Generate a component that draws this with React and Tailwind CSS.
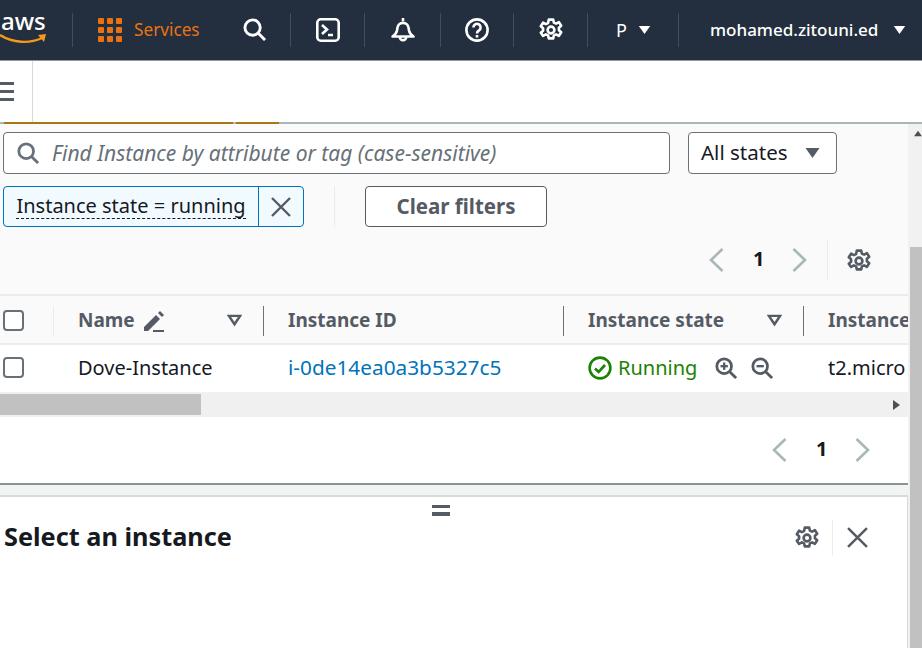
function Divider({ className = "h-[34px] bg-[#414d5c]" }) {
  return <div className={`w-px shrink-0 ${className}`} />;
}

function Caret({ className = "" }) {
  return (
    <svg viewBox="0 0 16 12" className={className}>
      <path d="M1 1h14L8 11z" fill="currentColor" />
    </svg>
  );
}

function SortCaret() {
  return (
    <svg viewBox="0 0 16 14" className="h-[13px] w-[15px] text-[#545b64]">
      <path d="M2 2h12L8 11z" fill="none" stroke="currentColor" strokeWidth="2.6" />
    </svg>
  );
}

function Gear({ className = "" }) {
  return (
    <svg viewBox="0 0 24 24" fill="none" stroke="currentColor" strokeWidth="2.6" strokeLinejoin="round" className={className}>
      <circle cx="12" cy="12" r="3.4" />
      <path d="M9.8 1.6h4.4l.7 3 2.2 1 2.8-1.5 2.3 3.7-2.3 2v2.4l2.3 2-2.3 3.7-2.8-1.5-2.2 1-.7 3H9.8l-.7-3-2.2-1-2.8 1.5L1.8 14.7l2.3-2v-2.4l-2.3-2 2.3-3.7 2.8 1.5 2.2-1z" />
    </svg>
  );
}

function SearchIcon({ className = "" }) {
  return (
    <svg viewBox="0 0 24 24" fill="none" stroke="currentColor" strokeWidth="3" className={className}>
      <circle cx="10" cy="10" r="8" />
      <path d="M15.5 15.5 23 23" />
    </svg>
  );
}

function ZoomIcon({ plus }) {
  return (
    <svg viewBox="0 0 24 24" fill="none" stroke="#545b64" strokeWidth="3" className="h-[22px] w-[22px]">
      <circle cx="10" cy="10" r="8" />
      <path d="M15.5 15.5 23 23" />
      <path d="M6 10h8" strokeWidth="2.6" />
      {plus && <path d="M10 6v8" strokeWidth="2.6" />}
    </svg>
  );
}

function CloseIcon({ className = "" }) {
  return (
    <svg viewBox="0 0 20 20" fill="none" stroke="#545b64" strokeWidth="2.4" className={className}>
      <path d="M1 1l18 18M19 1 1 19" />
    </svg>
  );
}

function Checkbox() {
  return <div className="h-[21px] w-[21px] rounded-[4px] border-2 border-[#687078] bg-white" />;
}

function Pager() {
  return (
    <div className="flex items-center gap-[29px]">
      <svg viewBox="0 0 15 26" fill="none" stroke="#aab7b8" strokeWidth="2.6" className="h-[26px] w-[15px]">
        <path d="M13.5 2 2 13l11.5 11" />
      </svg>
      <span className="mb-[2px] w-[10px] text-center text-[20px] font-bold text-[#16191f]">1</span>
      <svg viewBox="0 0 15 26" fill="none" stroke="#aab7b8" strokeWidth="2.6" className="h-[26px] w-[15px]">
        <path d="M1.5 2 13 13 1.5 24" />
      </svg>
    </div>
  );
}

function TopBar() {
  return (
    <header className="flex h-[61px] items-center border-b border-[#8d99a8] bg-[#232f3e] text-white">
      <div className="flex w-[72px] shrink-0 flex-col overflow-hidden pl-[1px]">
        <span className="-mt-[6px] text-[24px] leading-[26px] font-medium">aws</span>
        <svg viewBox="0 0 47 12" className="-ml-[1px] h-[12px] w-[47px]">
          <path d="M0 1c13 8 29 9 42 3" fill="none" stroke="#f7981d" strokeWidth="2.4" />
          <path d="M38 1l8-1-2 8z" fill="#f7981d" />
        </svg>
      </div>
      <Divider />
      <div className="flex w-[217px] shrink-0 items-center pl-[25px]">
        <div className="grid grid-cols-3 gap-[3px]">
          {[...Array(9)].map((_, i) => (
            <div key={i} className="h-[6px] w-[6px] rounded-[1px] bg-[#ec7211]" />
          ))}
        </div>
        <span className="ml-[12px] text-[17.2px] text-[#ec7211]">Services</span>
        <SearchIcon className="ml-[43px] h-[23px] w-[23px] text-white" />
      </div>
      <Divider />
      <div className="flex w-[73px] shrink-0 justify-center">
        <svg viewBox="0 0 24 24" fill="none" stroke="white" strokeWidth="2.6" className="h-[24px] w-[24px]">
          <rect x="1.3" y="1.3" width="21.4" height="21.4" rx="3.5" />
          <path d="M6 7l5 4.5-5 4.5M12 17h5" />
        </svg>
      </div>
      <Divider />
      <div className="flex w-[75px] shrink-0 justify-center">
        <svg viewBox="0 0 24 24" fill="none" stroke="white" strokeWidth="2.6" strokeLinejoin="round" className="h-[24px] w-[24px]">
          <path d="M1.5 18.5c2.5-1.5 4-3.5 4.5-6l.5-3a5.6 5.6 0 0 1 11 0l.5 3c.5 2.5 2 4.5 4.5 6z" />
          <path d="M8.8 19a3.2 3.2 0 0 0 6.4 0M12 0v3.5" />
        </svg>
      </div>
      <Divider />
      <div className="flex w-[72px] shrink-0 justify-center">
        <svg viewBox="0 0 24 24" fill="none" stroke="white" strokeWidth="2.6" className="h-[24px] w-[24px]">
          <circle cx="12" cy="12" r="10.6" />
          <path d="M8.4 9.4a3.6 3.6 0 1 1 5.6 3c-1.4.9-2 1.5-2 3" />
          <path d="M12 17v2.6" />
        </svg>
      </div>
      <Divider />
      <div className="flex w-[73px] shrink-0 justify-center">
        <Gear className="h-[24px] w-[24px] text-white" />
      </div>
      <Divider />
      <div className="flex w-[90px] shrink-0 items-center pl-[28px] text-[18px]">
        <span>P</span>
        <Caret className="ml-[11px] h-[10px] w-[13px] text-white" />
      </div>
      <Divider />
      <div className="flex items-center pl-[31px] text-[17px] font-medium whitespace-nowrap">
        <span>mohamed.zitouni.ed</span>
        <Caret className="ml-[15px] h-[10px] w-[13px] text-white" />
      </div>
    </header>
  );
}

function SubBar() {
  return (
    <div className="relative flex h-[63px] border-b-2 border-[#aab7b8] bg-white">
      <div className="flex w-[33px] items-center border-r border-[#d5dbdb]">
        <div className="flex w-[14px] flex-col gap-[5px]">
          <div className="h-[3px] bg-[#545b64]" />
          <div className="h-[3px] bg-[#545b64]" />
          <div className="h-[3px] bg-[#545b64]" />
        </div>
      </div>
      <div className="absolute bottom-[-2px] left-[4px] flex gap-[3px]">
        <div className="h-[2px] w-[229px] bg-[#a6780f]" />
        <div className="h-[2px] w-[43px] bg-[#a6780f]" />
      </div>
    </div>
  );
}

function Filters() {
  return (
    <section className="h-[172px] border-b-2 border-[#eaeded] bg-[#fafafa] pt-[8px] pl-[3px]">
      <div className="flex gap-[18px]">
        <div className="flex h-[42px] w-[667px] items-center rounded-[4px] border border-[#687078] bg-white pl-[13px]">
          <SearchIcon className="h-[22px] w-[22px] text-[#687078]" />
          <span className="mt-[2px] ml-[13px] text-[21px] whitespace-nowrap text-[#687078] italic">
            Find Instance by attribute or tag (case-sensitive)
          </span>
        </div>
        <div className="flex h-[42px] w-[149px] items-center rounded-[4px] border border-[#687078] bg-white pl-[12px] text-[20.5px] text-[#16191f]">
          <span className="mb-[2px]">All states</span>
          <Caret className="ml-[16px] h-[12px] w-[17px] text-[#545b64]" />
        </div>
      </div>
      <div className="mt-[12px] flex items-center">
        <div className="flex h-[41px] w-[301px] rounded-[4px] border border-[#0073bb] bg-[#f1faff]">
          <div className="flex w-[255px] items-center justify-center border-r border-[#0073bb]">
            <span className="mb-[2px] border-b border-dashed border-[#16191f] text-[20px] leading-[25px] whitespace-nowrap text-[#16191f]">
              Instance state = running
            </span>
          </div>
          <div className="flex flex-1 items-center justify-center">
            <CloseIcon className="h-[20px] w-[20px]" />
          </div>
        </div>
        <div className="ml-[30px] h-[41px] w-px bg-[#eaeded]" />
        <button className="ml-[30px] flex h-[41px] w-[182px] items-center justify-center rounded-[4px] border border-[#545b64] bg-white text-[20.5px] font-bold text-[#545b64]">
          Clear filters
        </button>
      </div>
      <div className="mt-[12px] flex items-center justify-end pr-[37px]">
        <Pager />
        <div className="mr-[19px] ml-[20px] h-[41px] w-px bg-[#eaeded]" />
        <Gear className="mt-[2px] h-[24px] w-[24px] text-[#545b64]" />
      </div>
    </section>
  );
}

function InstanceTable() {
  return (
    <section className="bg-white">
      <div className="grid h-[49px] grid-cols-[54px_210px_300px_240px_104px] items-center border-b-2 border-[#eaeded] bg-[#fafafa] pt-[2px] text-[19px] font-bold text-[#545b64]">
        <div className="flex h-[30px] items-center border-r border-[#eaeded] pl-[3px]">
          <Checkbox />
        </div>
        <div className="flex h-[30px] items-center border-r border-[#687078] pl-[24px]">
          <span>Name</span>
          <svg viewBox="0 0 22 22" className="ml-[8px] h-[22px] w-[22px]">
            <path d="M1 17 13 5l4 4L5 21H1zM15 3l2-2 4 4-2 2z" fill="#545b64" />
            <path d="M10 20h11v2H10z" fill="#545b64" />
          </svg>
          <div className="mr-[21px] ml-auto">
            <SortCaret />
          </div>
        </div>
        <div className="flex h-[30px] items-center border-r border-[#687078] pl-[24px]">Instance ID</div>
        <div className="flex h-[30px] items-center border-r border-[#687078] pl-[24px]">
          <span>Instance state</span>
          <div className="mr-[21px] ml-auto">
            <SortCaret />
          </div>
        </div>
        <div className="flex h-[30px] items-center overflow-hidden pl-[24px] whitespace-nowrap">Instance type</div>
      </div>
      <div className="grid h-[47px] grid-cols-[54px_210px_300px_240px_104px] items-center pb-[2px] text-[20px] text-[#16191f]">
        <div className="pl-[3px]">
          <Checkbox />
        </div>
        <div className="pl-[24px]">Dove-Instance</div>
        <div className="pl-[24px] text-[20.8px] text-[#0073bb]">i-0de14ea0a3b5327c5</div>
        <div className="flex items-center pl-[24px]">
          <svg viewBox="0 0 24 24" fill="none" stroke="#1d8102" strokeWidth="2.6" className="h-[24px] w-[24px]">
            <circle cx="12" cy="12" r="10.4" />
            <path d="M7 12.5l3.6 3.4L17 9" />
          </svg>
          <span className="ml-[6px] text-[#1d8102]">Running</span>
          <div className="ml-[18px] flex gap-[14px]">
            <ZoomIcon plus />
            <ZoomIcon />
          </div>
        </div>
        <div className="overflow-hidden pl-[24px] whitespace-nowrap">t2.micro</div>
      </div>
      <div className="flex h-[25px] items-center justify-between bg-[#f0f0f0]">
        <div className="h-[21px] w-[201px] bg-[#c1c1c1]" />
        <svg viewBox="0 0 7 10" className="mr-[8px] h-[10px] w-[7px]">
          <path d="M0 0l7 5-7 5z" fill="#505050" />
        </svg>
      </div>
      <div className="flex h-[66px] items-center justify-end pr-[38px]">
        <Pager />
      </div>
    </section>
  );
}

function DetailsPanel() {
  return (
    <section className="border-t-2 border-[#879596] bg-[#f2f3f3] pt-[10px]">
      <div className="h-[154px] border-t-2 border-r border-[#d5dbdb] bg-white">
        <div className="flex flex-col items-center pt-[8px] pr-[26px]">
          <div className="flex w-[18px] flex-col gap-[4px]">
            <div className="h-[3px] bg-[#545b64]" />
            <div className="h-[4px] bg-[#545b64]" />
          </div>
        </div>
        <div className="mt-[2px] flex items-center pr-[39px] pl-[4px]">
          <h2 className="mb-[4px] text-[25.3px] leading-[36px] font-bold text-[#16191f]">Select an instance</h2>
          <Gear className="ml-auto h-[24px] w-[24px] text-[#545b64]" />
          <div className="mr-[14px] ml-[13px] h-[36px] w-px bg-[#eaeded]" />
          <CloseIcon className="mb-[2px] h-[21px] w-[21px]" />
        </div>
      </div>
    </section>
  );
}

export default function App() {
  return (
    <div
      className="h-[648px] w-[922px] overflow-hidden bg-white"
      style={{ fontFamily: '"Noto Sans", sans-serif' }}
    >
      <TopBar />
      <SubBar />
      <div className="flex">
        <main className="w-[908px] shrink-0 overflow-hidden">
          <Filters />
          <InstanceTable />
          <DetailsPanel />
        </main>
        <div className="flex h-[524px] flex-1 flex-col bg-[#f1f1f1]">
          <svg viewBox="0 0 10 7" className="mt-[6px] ml-[6px] h-[7px] w-[8px]">
            <path d="M5 0l5 7H0z" fill="#505050" />
          </svg>
          <div className="mt-[110px] ml-[2px] flex-1 bg-[#c1c1c1]" />
        </div>
      </div>
    </div>
  );
}
